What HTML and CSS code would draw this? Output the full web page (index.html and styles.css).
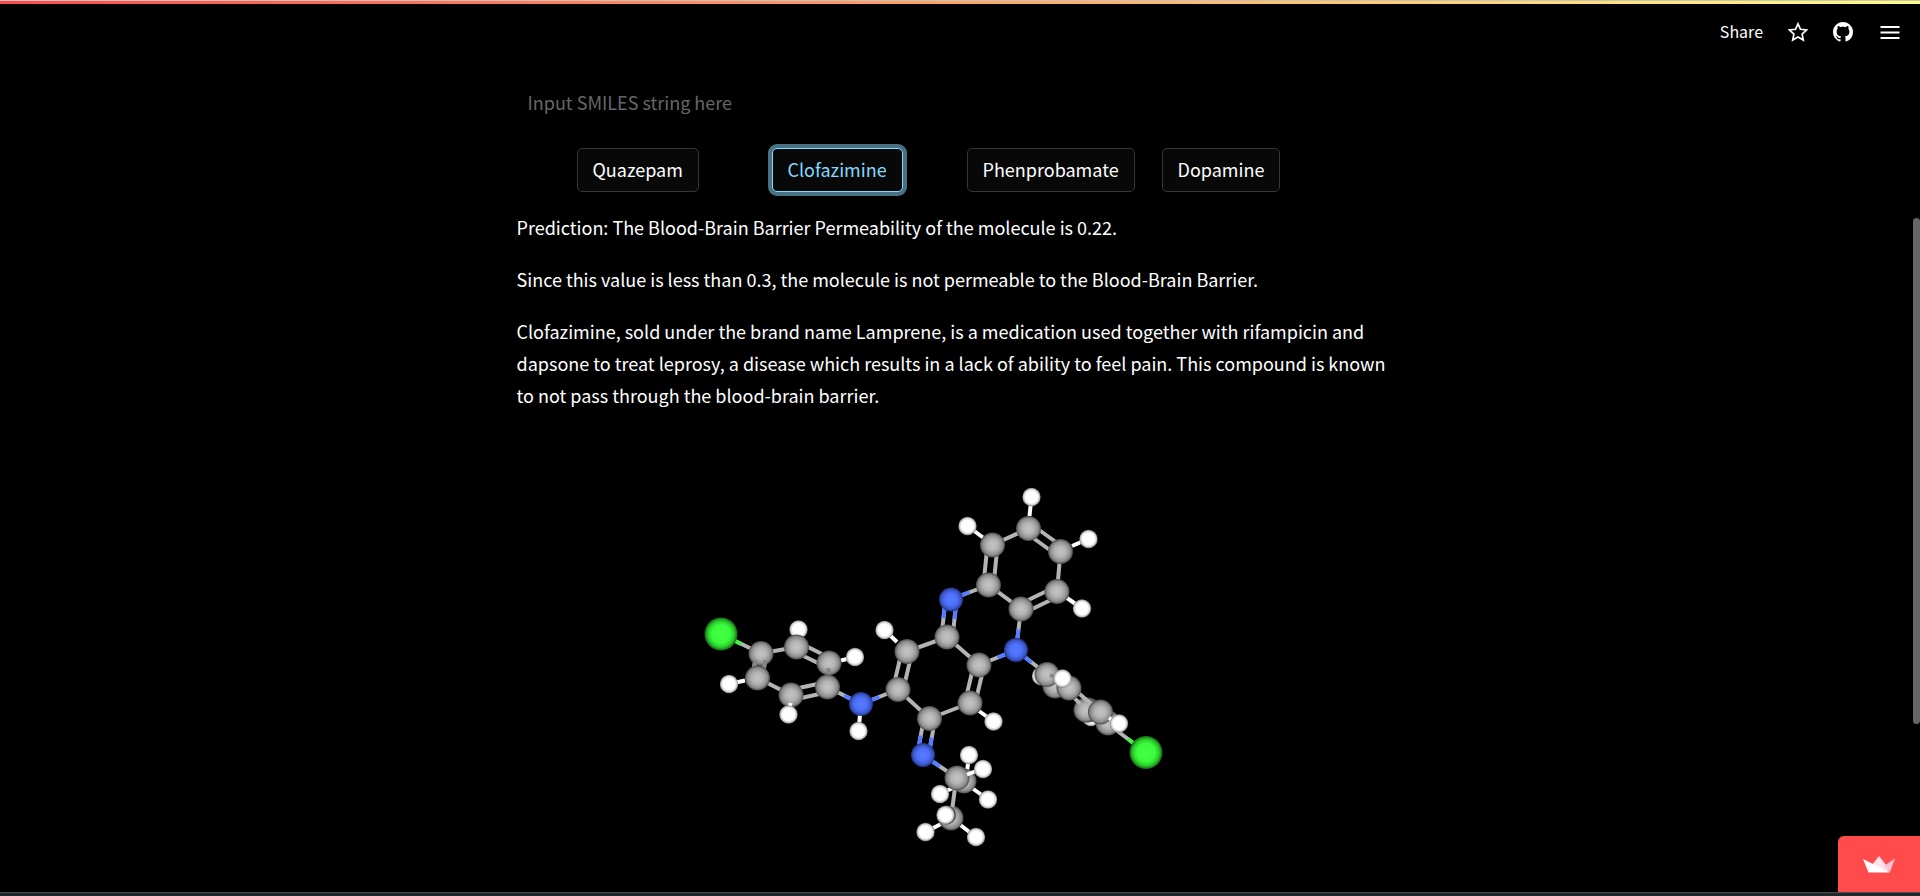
FILE: index.html
```html
<!DOCTYPE html>
<html lang="en">
<head>
<meta charset="utf-8">
<title>Blood-Brain Barrier Permeability</title>
<link rel="stylesheet" href="styles.css">
</head>
<body>
<div class="decoration"></div>
<header class="toolbar">
  <button class="tool share" type="button">Share</button>
  <button class="tool" type="button" aria-label="Favorite">
    <svg width="20" height="20" viewBox="0 0 20 20"><path d="M10 1.8l2.5 5.5 6 .7-4.4 4.1 1.2 5.9L10 15l-5.3 3 1.2-5.9L1.500 8l6-.7z" fill="none" stroke="#fff" stroke-width="1.700"/></svg>
  </button>
  <a class="tool" href="#" aria-label="View source on GitHub">
    <svg width="20" height="20" viewBox="0 0 16 16"><path fill="#fff" d="M8 0C3.580 0 0 3.580 0 8c0 3.540 2.290 6.530 5.470 7.590.4.070.55-.17.55-.38 0-.19-.01-.82-.01-1.490-2.010.37-2.530-.49-2.690-.94-.09-.23-.48-.94-.82-1.130-.28-.15-.68-.52-.01-.53.63-.01 1.080.58 1.230.82.72 1.210 1.870.87 2.330.66.07-.52.28-.87.51-1.070-1.780-.2-3.640-.89-3.640-3.950 0-.87.31-1.590.82-2.150-.08-.2-.36-1.020.08-2.120 0 0 .67-.21 2.200.82.64-.18 1.320-.27 2-.27s1.360.09 2 .27c1.530-1.040 2.200-.82 2.200-.82.44 1.100.16 1.920.08 2.120.51.56.82 1.270.82 2.150 0 3.070-1.870 3.750-3.650 3.950.29.25.54.73.54 1.480 0 1.070-.01 1.930-.01 2.200 0 .21.15.46.55.38A8.010 8.010 0 0 0 16 8c0-4.420-3.580-8-8-8z"/></svg>
  </a>
  <button class="tool menu" type="button" aria-label="Main menu">
    <svg width="20" height="20" viewBox="0 0 20 20"><path d="M0.500 5h19M0.500 10.500h19M0.500 16h19" stroke="#fff" stroke-width="2"/></svg>
  </button>
</header>
<main class="content">
  <input class="smiles" type="text" aria-label="SMILES string" placeholder="Input SMILES string here">
  <div class="examples">
    <button class="example" type="button">Quazepam</button>
    <button class="example active" type="button">Clofazimine</button>
    <button class="example" type="button">Phenprobamate</button>
    <button class="example" type="button">Dopamine</button>
  </div>
  <div class="result">
    <p>Prediction: The Blood-Brain Barrier Permeability of the molecule is 0.22.</p>
    <p>Since this value is less than 0.3, the molecule is not permeable to the Blood-Brain Barrier.</p>
    <p>Clofazimine, sold under the brand name Lamprene, is a medication used together with rifampicin and dapsone to treat leprosy, a disease which results in a lack of ability to feel pain. This compound is known to not pass through the blood-brain barrier.</p>
  </div>
  <svg class="molecule" width="534" height="390" viewBox="690 470 534 390" role="img" aria-label="Clofazimine molecule">
    <defs>
      <radialGradient id="gc"><stop offset="0" stop-color="#c4c4c4"/><stop offset=".45" stop-color="#b4b4b4"/><stop offset=".8" stop-color="#8c8c8c"/><stop offset="1" stop-color="#484848"/></radialGradient>
      <radialGradient id="gn"><stop offset="0" stop-color="#567cff"/><stop offset=".5" stop-color="#4e70fa"/><stop offset=".8" stop-color="#3b57ca"/><stop offset="1" stop-color="#203078"/></radialGradient>
      <radialGradient id="gh"><stop offset="0" stop-color="#fff"/><stop offset=".65" stop-color="#fff"/><stop offset=".85" stop-color="#d0d0d0"/><stop offset="1" stop-color="#787878"/></radialGradient>
      <radialGradient id="gl"><stop offset="0" stop-color="#43ff43"/><stop offset=".55" stop-color="#3cfb3c"/><stop offset=".8" stop-color="#2bcb2b"/><stop offset="1" stop-color="#146414"/></radialGradient>
      <circle id="c" r="12.500" fill="url(#gc)"/>
      <circle id="n" r="12" fill="url(#gn)"/>
      <circle id="h" r="9.200" fill="url(#gh)"/>
      <circle id="l" r="16.500" fill="url(#gl)"/>
    </defs>
    <g class="bond carbon">
      <path d="M721 634L761 653.500L796.500 647M829 663L827.500 687L861 704L898 689.500L929.500 718.500L970 703M907 651.500L947 637L979 665L1016 650L1021 609L988.500 585L951 599.500M992.500 545L1028.500 528.500M1060.500 551.500L1057 591.500M1016 650L1047 674.500M757.500 678L791 695"/>
      <path d="M987.500 544.500L983.500 584.500M997.500 545.500L993.500 585.500M1025.500 532.500L1057.500 555.500M1031.500 524.500L1063.500 547.500M1023 613.500L1059 596M1019 604.500L1055 587"/>
      <path d="M956.500 600L952.500 637.500M945.500 599L941.500 636.500M912 652.500L903 690.500M902 650.500L893 688.500M984 666L975 704M974 664L965 702M935 719.500L928.500 756M924 717.500L917.500 754"/>
      <path d="M766 654L762.500 679M756 653L752.500 678M794.500 651.500L827 667.500M799 642.500L831 658.500M792 700L828.500 692M790 690L826.500 682"/>
      <path d="M923 755L957 778"/>
    </g>
    <g class="bond nitrogen">
      <path d="M844 695.500L861 704L879.500 697M969.500 592L951 599.500M997.500 657.500L1016 650L1018.500 629.500M1016 650L1031.500 662.500M923 755L940 766.500"/>
      <path d="M956.500 600L954.500 619M945.500 599L943.500 618M931.700 737.500L928.500 756M920.700 735.500L917.500 754"/>
    </g>
    <path class="bond chlorine" d="M721 634L741 644"/>
    <g class="bond hydrogen">
      <path d="M884.500 630L897 642M855 657L841 660.500M729 684L745 680.500M858.500 731L860 715M993.500 721.500L979 711M967.500 526L983 537.500M1031.500 497L1029.500 516M1088 539L1072 546M1082 608.500L1067 598"/>
    </g>
    <use href="#h" x="798.500" y="629.500"/>
    <path class="bond hydrogen" d="M798 633V638"/>
    <use href="#l" x="721" y="634"/>
    <use href="#c" x="761" y="653.500"/>
    <path class="bond shade" d="M756 660L754 670M765.500 660L763 672M829 674L828.500 681"/>
    <use href="#c" x="757.500" y="678"/><use href="#c" x="796.500" y="647"/><use href="#c" x="829" y="663"/>
    <path class="bond shade" d="M828.500 668V678"/>
    <use href="#c" x="827.500" y="687"/><use href="#c" x="791" y="695"/>
    <path class="bond hydrogen" d="M790.500 703L789 711"/>
    <use href="#h" x="788.500" y="714.500"/><use href="#h" x="855" y="657"/><use href="#h" x="729" y="684"/>
    <use href="#n" x="861" y="704"/><use href="#h" x="858.500" y="731"/>
    <use href="#c" x="898" y="689.500"/><use href="#c" x="907" y="651.500"/><use href="#h" x="884.500" y="630"/>
    <use href="#n" x="951" y="599.500"/><use href="#c" x="947" y="637"/><use href="#c" x="979" y="665"/>
    <use href="#c" x="970" y="703"/><use href="#c" x="929.500" y="718.500"/><use href="#h" x="993.500" y="721.500"/>
    <use href="#n" x="923" y="755"/>
    <use href="#c" x="988.500" y="585"/><use href="#c" x="1021" y="609"/><use href="#c" x="1057" y="591.500"/>
    <use href="#c" x="992.500" y="545"/><use href="#c" x="1028.500" y="528.500"/><use href="#c" x="1060.500" y="551.500"/>
    <use href="#h" x="967.500" y="526"/><use href="#h" x="1031.500" y="497"/><use href="#h" x="1088.500" y="539"/><use href="#h" x="1082" y="608.500"/>
    <use href="#n" x="1016" y="650"/>
    <use href="#h" x="1041" y="676"/><use href="#h" x="1091" y="717"/>
    <use href="#c" x="1055" y="686"/>
    <use href="#c" x="1088" y="710"/><use href="#c" x="1086" y="710"/>
    <use href="#c" x="1047" y="674.500"/>
    <path class="bond carbon" d="M1069 692L1080 704M1074 689L1099 711M1108 724L1146 752.500"/>
    <path class="bond chlorine" d="M1128 739L1146 752.500"/>
    <use href="#c" x="1108" y="723"/>
    <use href="#c" x="1069" y="688"/><use href="#c" x="1100.500" y="712"/>
    <path class="bond shade" d="M1050 675L1060 679"/>
    <use href="#h" x="1062.500" y="678.500"/>
    <path class="bond hydrogen" d="M1109 718L1116 722"/>
    <use href="#h" x="1119" y="723.500"/><use href="#l" x="1146" y="752.500"/>
    <path class="bond hydrogen" d="M969 755L967 772M940 794L957 786M988 799.500L972 788"/>
    <use href="#c" x="964" y="781"/>
    <use href="#h" x="969" y="755"/><use href="#h" x="940" y="794"/><use href="#h" x="988" y="799.500"/>
    <path class="bond hydrogen" d="M925.500 832L943 823M976 837L959 824"/>
    <use href="#c" x="951" y="818"/>
    <path class="bond carbon" d="M956 780L952.500 807"/>
    <use href="#c" x="957" y="778"/>
    <path class="bond hydrogen" d="M967 774.500L979 770"/>
    <use href="#h" x="983" y="769"/>
    <circle cx="946.500" cy="815" r="9.500" fill="#4c4c4c"/>
    <use href="#h" x="945.500" y="815"/><use href="#h" x="925.500" y="832"/><use href="#h" x="976" y="837"/>
  </svg>
</main>
<div class="scrollbar"></div>
<a class="badge" href="#" aria-label="Hosted with Streamlit">
  <svg width="34" height="18" viewBox="0 0 34 18"><path fill="#ffe3ea" d="M17 1L10 10L28 17L24 10z"/><path fill="#ffc0cf" d="M33 3.500L22 11L28 17z"/><path fill="#fff" d="M1 4L6.500 17.500H28z"/></svg>
</a>
<div class="bottom-edge"></div>
</body>
</html>
```
FILE: styles.css
```css
* { box-sizing: border-box; }

body {
  margin: 0;
  min-height: 100vh;
  display: flex;
  flex-direction: column;
  background: #000;
  color: #fff;
  font: 18px/32px "Noto Sans CJK SC", "Noto Sans", sans-serif;
}

button, input { font: inherit; color: inherit; }

.decoration {
  height: 4px;
  border-top: 1px solid #c4c4c4;
  background: linear-gradient(90deg, #ff4b4b, #fffd80);
}

.toolbar {
  display: flex;
  justify-content: flex-end;
  align-items: center;
  gap: 25px;
  height: 56px;
  padding-right: 20px;
}

.tool {
  display: flex;
  padding: 0;
  border: 0;
  background: none;
}

.share {
  padding-bottom: 2px;
  font-size: 16px;
}

.menu { margin-left: 2px; }

.content {
  display: flex;
  flex-direction: column;
  flex: 1;
  width: 100%;
  max-width: 887px;
  margin: 0 auto;
  padding: 18px 7px 0 0;
}

.smiles {
  height: 48px;
  padding: 0 11px;
  border: 0;
  outline: 0;
  background: transparent;
}

.smiles::placeholder { color: #666; opacity: 1; }

.examples {
  display: grid;
  grid-template-columns: repeat(4, 1fr);
  justify-items: start;
  gap: 20px;
  margin: 22px 0 19px;
  padding: 0 60px;
}

.example {
  height: 44px;
  padding: 0 15px 2px;
  border: 1px solid #363636;
  border-radius: 5px;
  background: #080808;
  white-space: nowrap;
}

.example.active {
  border-color: #83d9ff;
  color: #83d9ff;
  box-shadow: 0 0 0 4px #497184;
}

.result p { margin: 0 0 20px; }

.molecule {
  align-self: center;
  margin-top: 39px;
}

.bond { fill: none; stroke-width: 4; }
.carbon { stroke: #b4b4b4; }
.nitrogen { stroke: #567cff; }
.chlorine { stroke: #3cf53c; }
.hydrogen { stroke: #fff; }
.shade { stroke: #858585; }

.scrollbar {
  position: fixed;
  top: 218px;
  right: 0;
  width: 7px;
  height: 506px;
  border-radius: 4px;
  background: #666;
}

.badge {
  position: fixed;
  right: 0;
  bottom: 4px;
  display: flex;
  justify-content: center;
  width: 82px;
  height: 56px;
  padding-top: 19px;
  border-radius: 6px 0 0 0;
  background: #ff4b4b;
}

.bottom-edge {
  height: 4px;
  border-top: 1px solid #4a4e52;
  background: #22272b;
}
```
